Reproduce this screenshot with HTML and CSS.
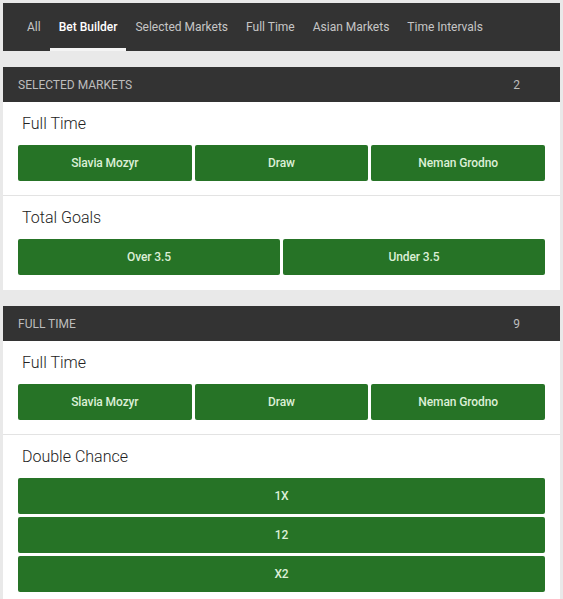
FILE: index.html
```html
<!DOCTYPE html>
<html>
<head>
<meta charset="utf-8">
<link rel="stylesheet" href="styles.css">
</head>
<body>
<nav class="tabs">
  <span class="tab">All</span>
  <span class="tab active">Bet Builder</span>
  <span class="tab">Selected Markets</span>
  <span class="tab">Full Time</span>
  <span class="tab">Asian Markets</span>
  <span class="tab">Time Intervals</span>
</nav>

<section class="group">
  <header class="group-head"><span>SELECTED MARKETS</span><span class="count">2</span></header>
  <div class="card">
    <div class="market">
      <div class="market-title">Full Time</div>
      <div class="row">
        <button class="odd">Slavia Mozyr</button>
        <button class="odd">Draw</button>
        <button class="odd">Neman Grodno</button>
      </div>
    </div>
    <div class="market">
      <div class="market-title">Total Goals</div>
      <div class="row">
        <button class="odd">Over 3.5</button>
        <button class="odd">Under 3.5</button>
      </div>
    </div>
  </div>
</section>

<section class="group">
  <header class="group-head"><span>FULL TIME</span><span class="count">9</span></header>
  <div class="card">
    <div class="market">
      <div class="market-title">Full Time</div>
      <div class="row">
        <button class="odd">Slavia Mozyr</button>
        <button class="odd">Draw</button>
        <button class="odd">Neman Grodno</button>
      </div>
    </div>
    <div class="market">
      <div class="market-title">Double Chance</div>
      <div class="column">
        <button class="odd">1X</button>
        <button class="odd">12</button>
        <button class="odd">X2</button>
      </div>
    </div>
  </div>
</section>
</body>
</html>
```

FILE: styles.css
```css
* { box-sizing: border-box; }
html, body { margin: 0; }
body {
  background: #e9e9e9;
  padding: 3px 3px 0;
  font-family: Roboto, "Liberation Sans", Arial, sans-serif;
  overflow: hidden;
  height: 599px;
}
.tabs {
  display: flex;
  align-items: stretch;
  height: 48px;
  background: #333333;
  padding-left: 15px;
}
.tab {
  display: flex;
  align-items: center;
  padding: 3px 9px 0;
  font-size: 12px;
  color: #c6c6c6;
  border-bottom: 3px solid transparent;
}
.tab.active {
  color: #ffffff;
  font-weight: 500;
  border-bottom-color: #f4f4f4;
}
.group { margin-top: 16px; }
.group-head {
  display: flex;
  justify-content: space-between;
  align-items: center;
  height: 35px;
  background: #333333;
  color: #bdbdbd;
  font-size: 12px;
  padding: 0 40px 0 15px;
}
.card { background: #ffffff; }
.market { padding: 11px 15px 14px; }
.market:last-child { padding-bottom: 15px; }
.market + .market { border-top: 1px solid #e3e3e3; }
.market-title {
  font-size: 16px;
  font-weight: 300;
  line-height: 22px;
  color: #222222;
  padding-left: 4px;
  margin-bottom: 10px;
}
.row { display: flex; gap: 3px; }
.column { display: flex; flex-direction: column; gap: 3px; }
.odd {
  flex: 1 1 0;
  height: 36px;
  border: 0;
  border-radius: 2px;
  background: #267326;
  color: #dcefd6;
  font-family: Roboto, "Liberation Sans", Arial, sans-serif;
  font-size: 12px;
  font-weight: 500;
  letter-spacing: -0.1px;
  padding: 0;
}
.column .odd { flex: none; }
```
